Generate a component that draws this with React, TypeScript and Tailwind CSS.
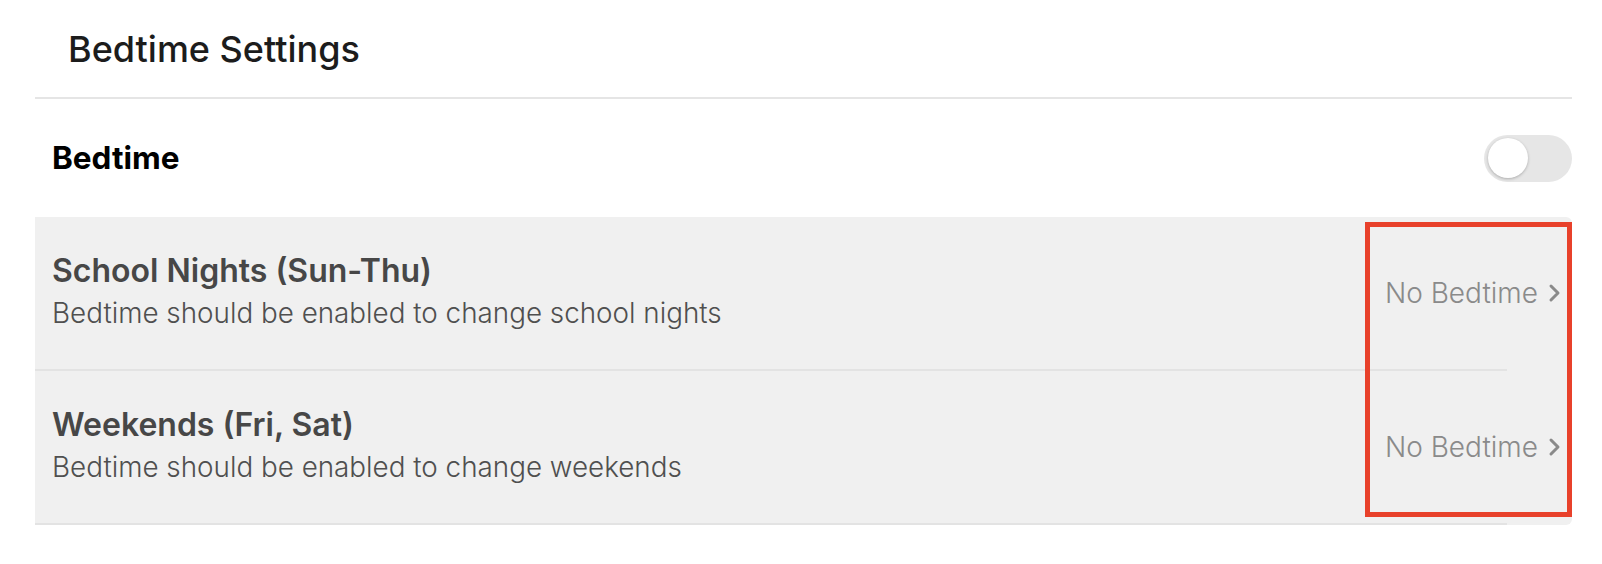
import React from "react";

const schedules = [
  { title: "School Nights (Sun-Thu)", note: "Bedtime should be enabled to change school nights" },
  { title: "Weekends (Fri, Sat)", note: "Bedtime should be enabled to change weekends" },
];

function Chevron() {
  return (
    <svg width="16" height="22" viewBox="0 0 16 22" fill="none" className="shrink-0">
      <polyline points="5,4 12,11 5,18" stroke="#8a8a8a" strokeWidth="3" strokeLinecap="round" strokeLinejoin="round" />
    </svg>
  );
}

function Toggle() {
  return (
    <div className="w-[88px] h-[47px] rounded-full bg-[#e6e6e6] p-[4px] flex items-center">
      <div className="w-[40px] h-[40px] rounded-full bg-white shadow-[0_1px_3px_rgba(0,0,0,0.25)]" />
    </div>
  );
}

export default function App() {
  return (
    <div className="relative w-[1602px] h-[564px] bg-white font-['Inter','Noto_Sans',sans-serif]">
      <div className="ml-[35px] mr-[30px]">
        {/* Header */}
        <div className="h-[97px] flex items-center pl-[33px] text-[36px] font-medium text-[#1c1c1c]">
          Bedtime Settings
        </div>
        <div className="h-[2px] bg-[#e5e5e5]" />

        {/* Master switch */}
        <div className="h-[118px] flex items-center justify-between pl-[17px]">
          <span className="text-[31.5px] font-bold text-black">Bedtime</span>
          <Toggle />
        </div>

        {/* Schedules */}
        <div className="bg-[#f0f0f0] rounded-r-[6px]">
          {schedules.map((s) => (
            <div key={s.title}>
              <div className="h-[152px] flex items-center justify-between pl-[17px] pr-[10px]">
                <div className="flex flex-col pt-[2px]">
                  <span className="text-[32px] leading-[38px] font-semibold text-[#474747]">{s.title}</span>
                  <span className="text-[27.8px] leading-[46px] font-light text-[#4f4f4f]">{s.note}</span>
                </div>
                <div className="flex items-center gap-[8px]">
                  <span className="text-[28px] font-light text-[#8a8a8a]">No Bedtime</span>
                  <Chevron />
                </div>
              </div>
              <div className="h-[2px] bg-[#e3e3e3] mr-[65px]" />
            </div>
          ))}
        </div>
      </div>

      {/* Highlight annotation */}
      <div className="absolute left-[1365px] top-[222px] w-[207px] h-[295px] border-[5px] border-[#e8412b] pointer-events-none" />
    </div>
  );
}
